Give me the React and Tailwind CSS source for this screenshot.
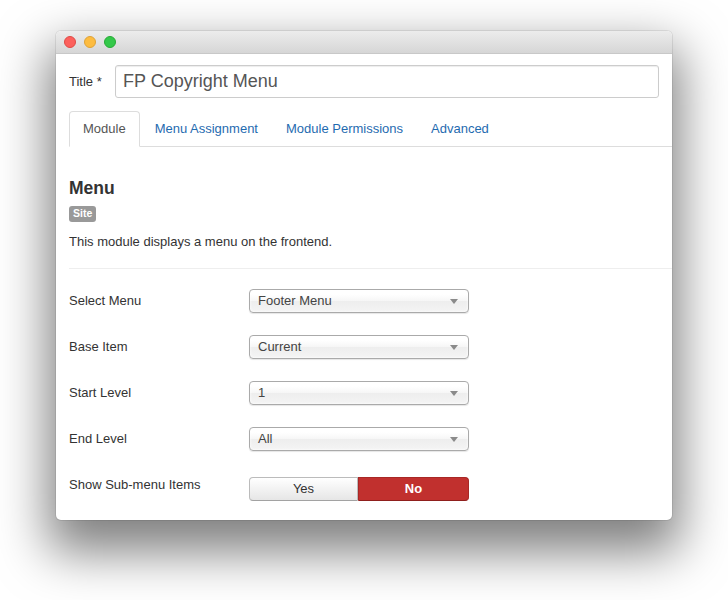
import React from "react";

const font = { fontFamily: '"Liberation Sans", Arial, Helvetica, sans-serif' };

function Select({ value }) {
  return (
    <div className="relative w-[220px] h-[24px] rounded-[4px] border border-[#aaaaaa] bg-[linear-gradient(#ffffff_20%,#f6f6f6_50%,#eeeeee_52%,#f4f4f4_100%)] shadow-[inset_0_0_3px_#ffffff,0_1px_1px_rgba(0,0,0,0.1)] flex items-center pl-[8px] text-[13px] text-[#444]">
      <span>{value}</span>
      <span className="absolute right-[10px] top-[9px] w-0 h-0 border-l-[4px] border-r-[4px] border-t-[5px] border-l-transparent border-r-transparent border-t-[#8a8a8a]" />
    </div>
  );
}

function Row({ label, children, last }) {
  return (
    <div className={"flex items-start " + (last ? "" : "mb-[22px]")}>
      <div className="w-[180px] pt-[3px] leading-[18px] text-[13px] text-[#333]">{label}</div>
      {children}
    </div>
  );
}

export default function App() {
  return (
    <div className="w-[728px] h-[600px] bg-white pt-[31px] pl-[56px]" style={font}>
      <div className="w-[616px] rounded-[5px] bg-white shadow-[0_24px_50px_8px_rgba(0,0,0,0.5),0_0_0_1px_rgba(0,0,0,0.08)] overflow-hidden">
        {/* titlebar */}
        <div className="h-[23px] bg-[linear-gradient(#ececec,#d6d6d6)] border-b border-[#c8c8c8] flex items-center pl-[8px] gap-[8px]">
          <span className="w-[12px] h-[12px] rounded-full bg-[#fc605c] border border-[#de4a45]" />
          <span className="w-[12px] h-[12px] rounded-full bg-[#fdbc40] border border-[#dea236]" />
          <span className="w-[12px] h-[12px] rounded-full bg-[#34c84a] border border-[#27aa35]" />
        </div>

        <div className="pl-[13px] pt-[11px] pb-[19px]">
          {/* title row */}
          <div className="flex items-center pr-[13px]">
            <label className="w-[46px] text-[13px] text-[#333]">Title *</label>
            <div className="flex-1 h-[33px] rounded-[3px] border border-[#cccccc] shadow-[inset_0_1px_1px_rgba(0,0,0,0.075)] flex items-center pl-[7px] text-[18px] text-[#555]">
              FP Copyright Menu
            </div>
          </div>

          {/* tabs */}
          <div className="mt-[13px] flex border-b border-[#dddddd] h-[36px]">
            <div className="h-[36px] px-[13px] mr-[2px] rounded-t-[4px] border border-[#dddddd] border-b-white bg-white text-[13px] text-[#555] flex items-center">
              Module
            </div>
            <div className="h-[35px] px-[13px] mr-[2px] text-[13px] text-[#1f6bb0] flex items-center">Menu Assignment</div>
            <div className="h-[35px] px-[13px] mr-[2px] text-[13px] text-[#1f6bb0] flex items-center">Module Permissions</div>
            <div className="h-[35px] px-[13px] mr-[2px] text-[13px] text-[#1f6bb0] flex items-center">Advanced</div>
          </div>

          <h3 className="mt-[29px] text-[17.5px] leading-[24px] font-bold text-[#333]">Menu</h3>
          <div className="mt-[5px] inline-flex items-center h-[16px] px-[4px] rounded-[3px] bg-[#999999] text-white text-[10.5px] font-bold">
            Site
          </div>
          <p className="mt-[9px] text-[13px] leading-[18px] text-[#333]">This module displays a menu on the frontend.</p>
          <div className="mt-[17px] h-px bg-[#eeeeee]" />

          <div className="mt-[20px]">
            <Row label="Select Menu"><Select value="Footer Menu" /></Row>
            <Row label="Base Item"><Select value="Current" /></Row>
            <Row label="Start Level"><Select value="1" /></Row>
            <Row label="End Level"><Select value="All" /></Row>
            <Row label="Show Sub-menu Items" last>
              <div className="mt-[4px] flex w-[220px] h-[24px] text-[13px]">
                <div className="w-[109px] h-full flex items-center justify-center rounded-l-[4px] border border-[#bbbbbb] border-b-[#a2a2a2] bg-[linear-gradient(#ffffff,#e6e6e6)] text-[#333]">
                  Yes
                </div>
                <div className="flex-1 h-full flex items-center justify-center rounded-r-[4px] bg-[#c1302e] border border-[#a82826] border-b-[#8f1f1d] text-white font-bold">
                  No
                </div>
              </div>
            </Row>
          </div>
        </div>
      </div>
    </div>
  );
}
